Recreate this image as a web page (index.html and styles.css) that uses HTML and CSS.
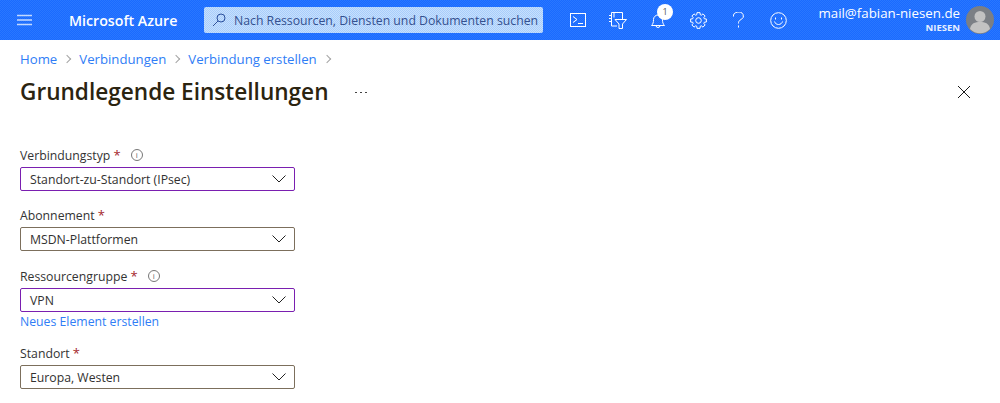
FILE: index.html
```html
<!DOCTYPE html>
<html lang="de">
<head>
<meta charset="utf-8">
<title>Grundlegende Einstellungen</title>
<link rel="stylesheet" href="styles.css">
</head>
<body>
<header class="topbar">
  <button class="menu" aria-label="Menü">
    <svg width="15" height="12" viewBox="0 0 15 12"><path d="M0 1.500h15M0 6h15M0 10.500h15" stroke="#c3d9ff" stroke-width="1.600" fill="none"/></svg>
  </button>
  <div class="brand">Microsoft Azure</div>
  <div class="search">
    <svg width="14" height="14" viewBox="0 0 14 14" fill="none" stroke="#2a4f9c" stroke-width="1"><circle cx="9" cy="5" r="4"/><path d="M6 8L1 13"/></svg>
    <span class="search-text">Nach Ressourcen, Diensten und Dokumenten suchen</span>
  </div>
  <nav class="tools">
    <span class="tool"><svg width="17" height="15" viewBox="0 0 17 15" fill="none" stroke="#fff" stroke-width="1"><rect x="0.500" y="0.500" width="15" height="13"/><path d="M3 3.500L7 6.500L3 9.500M8 10.500h5"/></svg></span>
    <span class="tool"><svg width="18" height="17" viewBox="0 0 18 17" fill="none" stroke="#fff" stroke-width="1"><path d="M13.500 7V.5H2.500v13.500H8M0 3.500h3M0 6.500h3M0 9.500h3M5 .5v5M6 7.500h11.500l-4 4.500v4.500h-3.500V12z"/></svg></span>
    <span class="tool bell"><svg width="14" height="17" viewBox="0 0 14 17" fill="none" stroke="#fff" stroke-width="1"><path d="M.5 13.500c1.500-1.500 2-3 2-6a4.500 4.500 0 0 1 9 0c0 3 .5 4.500 2 6zM5 13.500a2 2 0 0 0 4 0"/></svg><span class="badge">1</span></span>
    <span class="tool"><svg width="17" height="17" viewBox="-8.500 -8.500 17 17" fill="none" stroke="#fff" stroke-width="1"><circle r="2.800"/><path d="M5.740-1.750L7.850-1.530V1.530L5.740 1.750 5.300 2.820 6.630 4.470 4.470 6.630 2.820 5.300 1.750 5.740 1.530 7.850H-1.530L-1.750 5.740-2.820 5.300-4.470 6.630-6.630 4.470-5.300 2.820-5.740 1.750-7.850 1.530V-1.530L-5.740-1.750-5.300-2.820-6.630-4.470-4.470-6.630-2.820-5.300-1.750-5.740-1.530-7.850H1.530L1.750-5.740 2.820-5.300 4.470-6.630 6.630-4.470 5.300-2.820z"/></svg></span>
    <span class="tool"><svg width="11" height="16" viewBox="0 0 11 16" fill="none" stroke="#fff" stroke-width="1"><path d="M.5 4.500a5 4 0 1 1 7.500 3C6 8.700 5.500 9.500 5.500 11.500M5.500 13.500v2"/></svg></span>
    <span class="tool"><svg width="17" height="17" viewBox="0 0 17 17" fill="none" stroke="#fff" stroke-width="1"><circle cx="8.500" cy="8.500" r="7.800"/><path d="M4.500 9.500c1 4 7 4 8 0M5.500 5.500v2M11.500 5.500v2"/></svg></span>
  </nav>
  <div class="account">
    <div class="account-text">
      <div class="email">mail@fabian-niesen.de</div>
      <div class="tenant">NIESEN</div>
    </div>
    <svg class="avatar" width="28" height="28" viewBox="0 0 28 28"><circle cx="14" cy="14" r="14" fill="#7b7f85"/><circle cx="14" cy="10.500" r="5.500" fill="#c2c2c2"/><path d="M4 23c1-6 5-7 10-7s9 1 10 7a14 14 0 0 1-20 0z" fill="#c2c2c2"/></svg>
  </div>
</header>

<main class="page">
  <nav class="crumbs">
    <a class="link">Home</a><span class="sep"></span>
    <a class="link">Verbindungen</a><span class="sep"></span>
    <a class="link">Verbindung erstellen</a><span class="sep"></span>
  </nav>
  <div class="title-row">
    <h1 class="title">Grundlegende Einstellungen</h1>
    <span class="more"><i></i><i></i><i></i></span>
    <svg class="close" width="12" height="12" viewBox="0 0 12 12" fill="none" stroke="#1a1a1a" stroke-width="1"><path d="M0 0L12 12M12 0L0 12"/></svg>
  </div>

  <form class="form">
    <div class="field">
      <div class="label">Verbindungstyp <span class="req">*</span><span class="info">i</span></div>
      <div class="select active">Standort-zu-Standort (IPsec)<svg class="chev" width="14" height="8" viewBox="0 0 14 8" fill="none" stroke="#222" stroke-width="1"><path d="M.5.500L7 7L13.500.500"/></svg></div>
    </div>
    <div class="field">
      <div class="label">Abonnement <span class="req">*</span></div>
      <div class="select">MSDN-Plattformen<svg class="chev" width="14" height="8" viewBox="0 0 14 8" fill="none" stroke="#222" stroke-width="1"><path d="M.5.500L7 7L13.500.500"/></svg></div>
    </div>
    <div class="field group">
      <div class="label">Ressourcengruppe <span class="req">*</span><span class="info">i</span></div>
      <div class="select active">VPN<svg class="chev" width="14" height="8" viewBox="0 0 14 8" fill="none" stroke="#222" stroke-width="1"><path d="M.5.500L7 7L13.500.500"/></svg></div>
      <a class="link new">Neues Element erstellen</a>
    </div>
    <div class="field">
      <div class="label">Standort <span class="req">*</span></div>
      <div class="select">Europa, Westen<svg class="chev" width="14" height="8" viewBox="0 0 14 8" fill="none" stroke="#222" stroke-width="1"><path d="M.5.500L7 7L13.500.500"/></svg></div>
    </div>
  </form>
</main>
</body>
</html>
```
FILE: styles.css
```css
* { box-sizing: border-box; }
html, body { margin: 0; height: 100%; overflow: hidden; background: #fff; }
body { font-family: "Open Sans", "Noto Sans", "Liberation Sans", sans-serif; font-size: 12px; color: #2a2a2a; }

.topbar { height: 40px; background: repeating-conic-gradient(#1a6bff 0 25%, #2a77ff 0 50%) 0 0 / 2px 2px; display: flex; align-items: center; color: #fff; }
.menu { width: 15px; height: 12px; margin-left: 17px; padding: 0; border: 0; background: none; display: flex; }
.brand { margin-left: 37px; width: 135px; font-size: 14.200px; font-weight: 600; white-space: nowrap; }
.search { width: 339px; height: 26px; background: repeating-conic-gradient(#a9cdfb 0 25%, #c6e0fd 0 50%) 0 0 / 2px 2px; border-radius: 2px; display: flex; align-items: center; padding-left: 8px; gap: 8px; white-space: nowrap; }
.search svg { flex: none; }
.search-text { color: #34508f; font-size: 12.250px; }
.tools { margin-left: 15px; display: flex; }
.tool { width: 40px; height: 40px; display: flex; align-items: center; justify-content: center; position: relative; }
.badge { position: absolute; left: 19px; top: 4px; width: 16px; height: 16px; border-radius: 50%; background: #fff; color: #555; font-size: 9px; line-height: 16px; text-align: center; }
.account { margin-left: auto; display: flex; align-items: center; gap: 6px; padding-right: 6px; }
.account-text { text-align: right; }
.email { font-size: 13.300px; line-height: 16px; }
.tenant { font-size: 9.500px; font-weight: 700; line-height: 14px; color: #e6efff; }
.avatar { display: block; }

.page { padding: 0 0 0 20px; }
.link { color: #2f7df6; }
.crumbs { height: 38px; display: flex; align-items: center; font-size: 13.200px; }
.sep { width: 6px; height: 6px; margin: 0 9px 0 7px; border-top: 1px solid #a3a3a3; border-right: 1px solid #a3a3a3; transform: rotate(45deg); }
.title-row { height: 26px; margin-top: 1px; display: flex; align-items: center; position: relative; }
.title { margin: 0; font-size: 22.600px; line-height: 26px; font-weight: 600; color: #2b2410; white-space: nowrap; }
.more { margin-left: 26px; display: flex; gap: 3px; }
.more i { width: 2px; height: 1px; background: #444; display: block; }
.close { margin-left: auto; margin-right: 30px; }

.form { margin-top: 41px; width: 275px; display: flex; flex-direction: column; gap: 15px; }
.group { margin-top: 1px; }
.label { height: 18px; display: flex; align-items: center; font-size: 12.250px; color: #333; white-space: pre; margin-bottom: 3px; }
.req { color: #a4262c; font-size: 13px; }
.info { width: 12px; height: 12px; margin-left: 10px; border: 1px solid #777; border-radius: 50%; color: #666; font-size: 8px; line-height: 10px; text-align: center; display: block; }
.select { height: 24px; border: 1px solid #7c6f5c; border-radius: 2px; display: flex; align-items: center; justify-content: space-between; padding: 0 8px 0 9px; font-size: 12.250px; color: #323130; }
.select.active { border-color: #7a1fb0; }
.chev { flex: none; }
.new { display: block; margin-top: 2px; height: 15px; line-height: 15px; font-size: 12.250px; }
```
